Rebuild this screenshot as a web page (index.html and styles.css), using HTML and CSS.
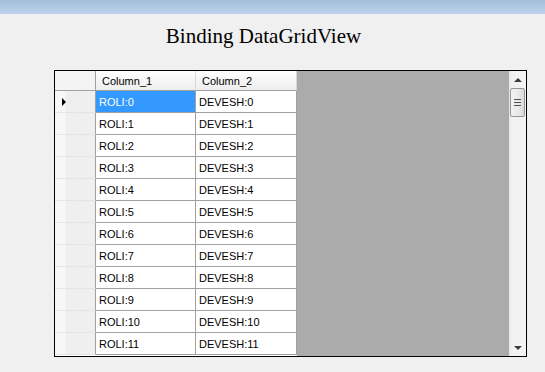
FILE: index.html
```html
<!DOCTYPE html>
<html lang="en">

<head>
    <meta charset="UTF-8" />
    <title>Binding DataGridView</title>
    <link rel="stylesheet" href="styles.css">
</head>

<body>
    <div class="titlebar"></div>
    <h1 class="title">Binding DataGridView</h1>

    <div class="grid">
        <div class="cols">
            <div class="row head">
                <div class="rh"></div>
                <div class="cell c1">Column_1</div>
                <div class="cell c2">Column_2</div>
            </div>
            <div class="row">
                <div class="rh current"></div>
                <div class="cell c1 selected">ROLI:0</div>
                <div class="cell c2">DEVESH:0</div>
            </div>
            <div class="row"><div class="rh"></div><div class="cell c1">ROLI:1</div><div class="cell c2">DEVESH:1</div></div>
            <div class="row"><div class="rh"></div><div class="cell c1">ROLI:2</div><div class="cell c2">DEVESH:2</div></div>
            <div class="row"><div class="rh"></div><div class="cell c1">ROLI:3</div><div class="cell c2">DEVESH:3</div></div>
            <div class="row"><div class="rh"></div><div class="cell c1">ROLI:4</div><div class="cell c2">DEVESH:4</div></div>
            <div class="row"><div class="rh"></div><div class="cell c1">ROLI:5</div><div class="cell c2">DEVESH:5</div></div>
            <div class="row"><div class="rh"></div><div class="cell c1">ROLI:6</div><div class="cell c2">DEVESH:6</div></div>
            <div class="row"><div class="rh"></div><div class="cell c1">ROLI:7</div><div class="cell c2">DEVESH:7</div></div>
            <div class="row"><div class="rh"></div><div class="cell c1">ROLI:8</div><div class="cell c2">DEVESH:8</div></div>
            <div class="row"><div class="rh"></div><div class="cell c1">ROLI:9</div><div class="cell c2">DEVESH:9</div></div>
            <div class="row"><div class="rh"></div><div class="cell c1">ROLI:10</div><div class="cell c2">DEVESH:10</div></div>
            <div class="row"><div class="rh"></div><div class="cell c1">ROLI:11</div><div class="cell c2">DEVESH:11</div></div>
        </div>
        <div class="blank"></div>
        <div class="vscroll">
            <div class="arrow up"></div>
            <div class="thumb">
                <span></span><span></span><span></span>
            </div>
            <div class="track"></div>
            <div class="arrow down"></div>
        </div>
    </div>
</body>

</html>
```

FILE: styles.css
```css
body {
    margin: 0;
    background: #f0f0f0;
    font-family: 'Liberation Sans', Arial, sans-serif;
    font-size: 11px;
    color: #000;
}

.titlebar {
    height: 14px;
    background: linear-gradient(#a4bedb, #bcd3ea);
}

.title {
    margin: 0;
    padding: 10px 18px 0 0;
    font-family: 'Liberation Serif', 'DejaVu Serif', serif;
    font-size: 21px;
    font-weight: normal;
    line-height: 25px;
    text-align: center;
    color: #000;
}

.grid {
    display: flex;
    width: 471px;
    height: 285px;
    margin: 21px 0 0 54px;
    border: 1px solid #000;
    background: #ababab;
}

.cols {
    width: 242px;
    background: #fff;
}

.row {
    display: flex;
    height: 22px;
}

.row.head {
    height: 20px;
}

.rh {
    position: relative;
    width: 41px;
    box-sizing: border-box;
    border-right: 1px solid #a0a0a0;
    border-bottom: 1px solid #e4e4e4;
    background: linear-gradient(90deg, #f7f7f7 0, #f7f7f7 10px, #eeeeee 11px, #f0f0f0);
}

.head .rh {
    border-bottom: 1px solid #a0a0a0;
    background: #f4f4f4;
}

.rh.current::after {
    content: "";
    position: absolute;
    left: 7px;
    top: 7px;
    border-left: 4px solid #000;
    border-top: 4px solid transparent;
    border-bottom: 4px solid transparent;
}

.cell {
    box-sizing: border-box;
    display: flex;
    align-items: center;
    padding-left: 3px;
    border-right: 1px solid #a0a0a0;
    border-bottom: 1px solid #a0a0a0;
    white-space: nowrap;
}

.c1 {
    width: 100px;
}

.c2 {
    width: 101px;
}

.head .cell {
    padding-left: 6px;
    border-right-color: #d8d8d8;
    background: linear-gradient(#ffffff, #f6f6f6 50%, #eeeeee);
}

.cell.selected {
    background: #3399ff;
    color: #fff;
}

.blank {
    flex: 1;
}

.vscroll {
    display: flex;
    flex-direction: column;
    width: 17px;
    background: linear-gradient(90deg, #e6e6e6, #f2f2f2 3px, #f4f4f4);
}

.arrow {
    height: 17px;
    display: flex;
    align-items: center;
    justify-content: center;
}

.arrow::before {
    content: "";
    border-left: 4px solid transparent;
    border-right: 4px solid transparent;
}

.arrow.up::before {
    border-bottom: 4px solid #3c3c3c;
}

.arrow.down::before {
    border-top: 4px solid #3c3c3c;
}

.thumb {
    display: flex;
    flex-direction: column;
    align-items: center;
    justify-content: center;
    gap: 2px;
    height: 29px;
    margin: 0 1px;
    box-sizing: border-box;
    border: 1px solid #979797;
    border-radius: 2px;
    background: linear-gradient(90deg, #f2f2f2, #ebebeb 50%, #d9d9d9);
}

.thumb span {
    width: 7px;
    height: 1px;
    background: #555;
    box-shadow: 0 1px 0 #e8e8e8;
}

.track {
    flex: 1;
}
```
